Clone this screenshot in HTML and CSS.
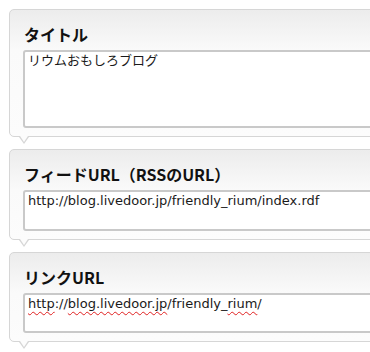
FILE: index.html
```html
<!DOCTYPE html>
<html lang="ja">
<head>
<meta charset="utf-8">
<title>フィード設定</title>
<link rel="stylesheet" href="styles.css">
</head>
<body>
<div class="form">
  <section class="box">
    <h2 class="label">タイトル</h2>
    <div class="field field-tall">リウムおもしろブログ</div>
    <span class="tail"></span>
  </section>
  <section class="box">
    <h2 class="label">フィードURL（RSSのURL）</h2>
    <div class="field">http://blog.livedoor.jp/friendly_rium/index.rdf</div>
    <span class="tail"></span>
  </section>
  <section class="box">
    <h2 class="label">リンクURL</h2>
    <div class="field field-short"><span class="spell">http</span>://<span class="spell">blog.livedoor.jp</span>/friendly_<span class="spell">rium</span>/</div>
    <span class="tail"></span>
  </section>
</div>
</body>
</html>
```
FILE: styles.css
```css
html, body {
  margin: 0;
  padding: 0;
  overflow: hidden;
  background: #ffffff;
}
body {
  width: 370px;
  height: 352px;
}
.form {
  display: flex;
  flex-direction: column;
  gap: 12px;
  padding: 9px 0 0 9px;
  width: 460px;
}
.box {
  position: relative;
  border: 1px solid #d6d6d6;
  border-radius: 5px;
  background: linear-gradient(#ececec 0px, #fafafa 40px, #fcfcfc 100%);
  padding: 0 0 8px 13px;
}
.label {
  margin: 0;
  padding: 14px 0 6px 1px;
  height: 20px;
  line-height: 20px;
  font-family: "Noto Sans CJK JP", "Liberation Sans", sans-serif;
  font-weight: bold;
  font-size: 16px;
  color: #111111;
}
.field {
  height: 37px;
  border: 2px solid #c9c9c9;
  border-radius: 3px;
  background: #ffffff;
  padding: 0 3px;
  font-family: "DejaVu Sans", "Noto Sans CJK JP", sans-serif;
  font-size: 13px;
  line-height: 17px;
  color: #1a1a1a;
  white-space: nowrap;
}
.field-tall {
  height: 74px;
}
.field-short {
  height: 36px;
}
.spell {
  text-decoration: underline wavy #e02020;
  text-decoration-thickness: 1px;
  text-underline-offset: 3px;
}
.tail {
  position: absolute;
  left: 9px;
  bottom: -8px;
  width: 0;
  height: 0;
  border-left: 5px solid transparent;
  border-right: 5px solid transparent;
  border-top: 7px solid #d6d6d6;
}
.tail::after {
  content: "";
  position: absolute;
  left: -4px;
  top: -8px;
  width: 0;
  height: 0;
  border-left: 4px solid transparent;
  border-right: 4px solid transparent;
  border-top: 6px solid #fcfcfc;
}
```
